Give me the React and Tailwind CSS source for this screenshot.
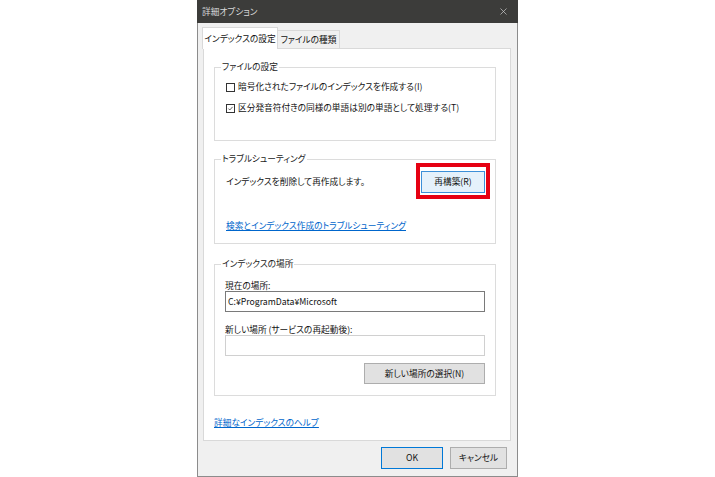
import { X } from "lucide-react";

// 詳細オプション ダイアログ (インデックスのオプション)

const GroupBox = ({ label, className, children }) => (
  <fieldset className={`border border-[#dcdcdc] px-[10px] ${className}`}>
    <legend className="ml-[-4px] px-[1px] leading-[14px] text-[#1a1a1a]">
      {label}
    </legend>
    {children}
  </fieldset>
);

const CheckRow = ({ checked, children, className }) => (
  <div className={`flex h-[14px] items-center gap-[3px] whitespace-nowrap ${className}`}>
    <span className="flex h-[9px] w-[9px] shrink-0 items-center justify-center border border-[#333] bg-white">
      {checked && (
        <svg viewBox="0 0 9 9" className="h-[9px] w-[9px]">
          <polyline
            points="1.8,4.6 3.6,6.4 7.2,2.4"
            fill="none"
            stroke="#333"
            strokeWidth="1"
          />
        </svg>
      )}
    </span>
    <span>{children}</span>
  </div>
);

export default function App() {
  return (
    <div className="flex h-[477px] w-full justify-center whitespace-nowrap bg-white font-['Noto_Sans_CJK_JP','Noto_Sans',sans-serif] text-[8.7px] text-[#111] [font-feature-settings:'palt']">
      <div className="flex w-[321px] flex-col">
        {/* タイトルバー */}
        <div className="flex h-[23px] items-center justify-between bg-[#3c3c3a] pl-[5px] pr-[9px] text-[#d8d8d8]">
          <span>詳細オプション</span>
          <X className="h-[11px] w-[11px] text-[#cfcfcf]" strokeWidth={1.5} />
        </div>

        <div className="flex flex-1 flex-col border-x border-b border-[#8c8c8c] bg-[#f0f0f0] pt-[4px]">
          {/* タブ */}
          <div className="ml-[4px] flex h-[21px] items-end">
            <div className="relative z-10 -mb-px flex h-[22px] w-[76px] items-center justify-center border-x border-t border-[#d9d9d9] bg-white">
              インデックスの設定
            </div>
            <div className="flex h-[18px] w-[62px] items-center justify-center border-t border-r border-[#d9d9d9] bg-[#f0f0f0]">
              ファイルの種類
            </div>
          </div>

          {/* タブパネル */}
          <div className="ml-[5px] mr-[6px] flex h-[393px] flex-col border border-[#d9d9d9] bg-white pl-[10px] pr-[14px] pt-[11px]">
            <GroupBox label="ファイルの設定" className="h-[81px]">
              <CheckRow className="mt-[6px] pl-[1px]">
                暗号化されたファイルのインデックスを作成する(I)
              </CheckRow>
              <CheckRow checked className="mt-[7px] pl-[1px]">
                区分発音符付きの同様の単語は別の単語として処理する(T)
              </CheckRow>
            </GroupBox>

            <GroupBox label="トラブルシューティング" className="mt-[11px] h-[92px]">
              <div className="mt-[5px] flex items-center justify-between pl-[1px]">
                <span>インデックスを削除して再作成します。</span>
                <button className="relative flex h-[22px] w-[64px] items-center justify-center border border-[#3c8fd8] bg-[#e5f1fb]">
                  再構築(R)
                  <span className="pointer-events-none absolute -top-[9px] -bottom-[7px] -left-[6px] -right-[6px] border-[4px] border-[#e60012]" />
                </button>
              </div>
              <a className="mt-[26px] block pl-[1px] leading-[14px] text-[#0066cc] underline underline-offset-1">
                検索とインデックス作成のトラブルシューティング
              </a>
            </GroupBox>

            <GroupBox label="インデックスの場所" className="mt-[13px] flex h-[139px] flex-col">
              <div className="mt-[9px] leading-[11px]">現在の場所:</div>
              <div className="flex h-[21px] items-center border border-[#7a7a7a] px-[2px]">
                C:¥ProgramData¥Microsoft
              </div>
              <div className="mt-[12px] leading-[11px]">
                新しい場所 (サービスの再起動後):
              </div>
              <div className="h-[21px] border border-[#d0d0d0]" />
              <button className="mt-[7px] flex h-[21px] w-[121px] items-center justify-center self-end border border-[#adadad] bg-[#e1e1e1]">
                新しい場所の選択(N)
              </button>
            </GroupBox>

            <a className="mt-[20px] block leading-[14px] text-[#0066cc] underline underline-offset-1">
              詳細なインデックスのヘルプ
            </a>
          </div>

          {/* フッター */}
          <div className="flex justify-end gap-[7px] pr-[10px] pt-[6px]">
            <button className="flex h-[22px] w-[62px] items-center justify-center border border-[#0078d7] bg-[#e1e1e1]">
              OK
            </button>
            <button className="flex h-[22px] w-[57px] items-center justify-center border border-[#adadad] bg-[#e1e1e1]">
              キャンセル
            </button>
          </div>
        </div>
      </div>
    </div>
  );
}
